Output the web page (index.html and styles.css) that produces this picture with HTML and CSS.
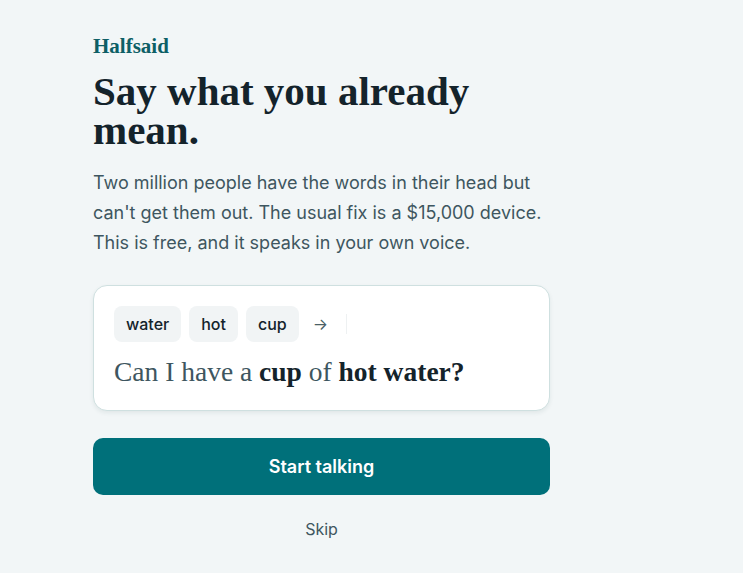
FILE: index.html
```html
<!DOCTYPE html>
<html lang="en">
<head>
  <meta charset="UTF-8" />
  <meta name="viewport" content="width=device-width, initial-scale=1.0"/>
  <title>Halfsaid</title>
  <link rel="stylesheet" href="styles.css">
</head>
<body>
  <div class="page">
    <div class="logo">Halfsaid</div>
    <h1>Say what you already mean.</h1>
    <p class="intro">Two million people have the words in their head but can't get them out. The usual fix is a $15,000 device. This is free, and it speaks in your own voice.</p>

    <div class="demo-card">
      <div class="chips">
        <span class="chip">water</span>
        <span class="chip">hot</span>
        <span class="chip">cup</span>
        <span class="arrow">&rarr;</span>
        <span class="caret"></span>
      </div>
      <div class="sentence">Can I have a <b>cup</b> of <b>hot water?</b></div>
    </div>

    <button class="start-btn">Start talking</button>
    <a href="#" class="skip">Skip</a>
  </div>
</body>
</html>
```

FILE: styles.css
```css
body {
  margin: 0;
  font-family: Inter, "Noto Sans", sans-serif;
  background-color: #f2f6f7;
  color: #14232b;
}
.page {
  width: 457px;
  padding: 34px 0 0 93px;
  display: flex;
  flex-direction: column;
}
.logo {
  font-family: "Liberation Serif", serif;
  font-weight: bold;
  font-size: 21px;
  color: #0d5f66;
}
h1 {
  margin: 13px 0 0;
  font-family: "Liberation Serif", serif;
  font-weight: bold;
  font-size: 41px;
  line-height: 39px;
  color: #14232b;
}
.intro {
  margin: 18px 0 0;
  font-size: 18px;
  line-height: 30px;
  color: #3e5660;
}
.demo-card {
  margin-top: 27px;
  background-color: white;
  border: 1px solid #cfe0e0;
  border-radius: 14px;
  box-shadow: 0 2px 4px rgba(20, 60, 70, 0.08);
  padding: 20px 20px 20px;
}
.chips {
  display: flex;
  align-items: center;
  gap: 8px;
}
.chip {
  background-color: #f1f4f5;
  border-radius: 8px;
  padding: 0 12px;
  height: 36px;
  line-height: 36px;
  font-size: 16px;
  font-weight: 500;
  color: #14232b;
}
.arrow {
  margin-left: 6px;
  font-size: 16px;
  color: #4a5f66;
}
.caret {
  width: 1px;
  height: 20px;
  margin-left: 10px;
  background-color: #eef1f2;
}
.sentence {
  margin-top: 12px;
  font-family: "Liberation Serif", serif;
  font-size: 27.5px;
  line-height: 36px;
  color: #3e5660;
}
.sentence b {
  color: #14232b;
}
.start-btn {
  margin-top: 27px;
  height: 57px;
  border: none;
  border-radius: 10px;
  background-color: #00707a;
  color: white;
  font-family: Inter, "Noto Sans", sans-serif;
  font-size: 18px;
  font-weight: 600;
  cursor: pointer;
}
.skip {
  margin-top: 24px;
  text-align: center;
  font-size: 16px;
  color: #3e5660;
  text-decoration: none;
}
```
